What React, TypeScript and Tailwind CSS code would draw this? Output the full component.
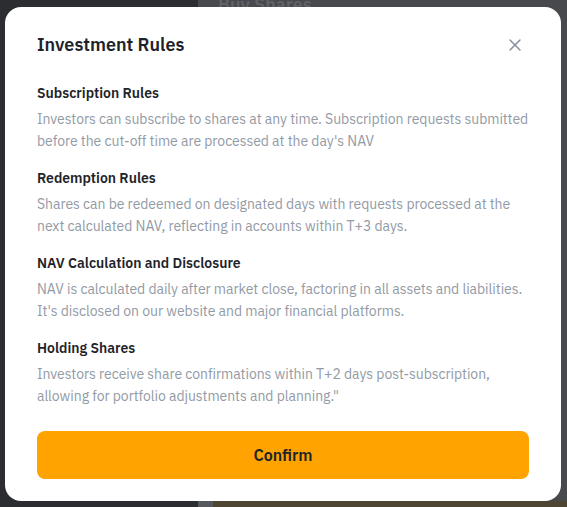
import { X } from "lucide-react";

const rules = [
  {
    title: "Subscription Rules",
    lines: [
      "Investors can subscribe to shares at any time. Subscription requests submitted",
      "before the cut-off time are processed at the day's NAV",
    ],
  },
  {
    title: "Redemption Rules",
    lines: [
      "Shares can be redeemed on designated days with requests processed at the",
      "next calculated NAV, reflecting in accounts within T+3 days.",
    ],
  },
  {
    title: "NAV Calculation and Disclosure",
    lines: [
      "NAV is calculated daily after market close, factoring in all assets and liabilities.",
      "It's disclosed on our website and major financial platforms.",
    ],
  },
  {
    title: "Holding Shares",
    lines: [
      "Investors receive share confirmations within T+2 days post-subscription,",
      "allowing for portfolio adjustments and planning.\"",
    ],
  },
];

export default function App() {
  return (
    <div
      className="relative w-[567px] h-[507px] overflow-hidden flex"
      style={{ fontFamily: "'IBM Plex Sans', 'Open Sans', Inter, sans-serif" }}
    >
      {/* page behind the overlay */}
      <div className="w-[198px] h-full bg-[#2b2d31]" />
      <div className="flex-1 h-full bg-[#47494d] flex flex-col">
        <div className="pl-[20px] -mt-[9px] text-[18px] text-[#5f6266] font-semibold">
          Buy Shares
        </div>
        <div className="flex-1" />
        <div className="h-[6px] flex">
          <div className="w-[15px] bg-[#55585c]" />
          <div className="flex-1 bg-[#4e4633]" />
        </div>
      </div>

      {/* modal */}
      <div className="absolute left-[5px] top-[7px] w-[556px] h-[494px] bg-white rounded-[16px] px-[32px] pt-[25px] pb-[22px] flex flex-col">
        <div className="flex items-center justify-between h-[26px]">
          <h2 className="text-[18px] leading-[26px] font-semibold text-[#1e2329]">
            Investment Rules
          </h2>
          <X size={20} strokeWidth={1.7} className="text-[#848e9c] mr-[4px]" />
        </div>

        <div className="mt-[25px] flex flex-col gap-[16px]">
          {rules.map((r) => (
            <div key={r.title}>
              <p className="text-[14px] leading-[20px] font-semibold text-[#1e2329]">
                {r.title}
              </p>
              <p className="mt-[5px] text-[14px] leading-[22px] tracking-[-0.05px] text-[#929aa5] whitespace-nowrap">
                {r.lines[0]}
                <br />
                {r.lines[1]}
              </p>
            </div>
          ))}
        </div>

        <button
          type="button"
          className="mt-[24px] h-[48px] w-full rounded-[8px] bg-[#fea300] text-[16px] font-semibold text-[#1e2329]"
        >
          Confirm
        </button>
      </div>
    </div>
  );
}
